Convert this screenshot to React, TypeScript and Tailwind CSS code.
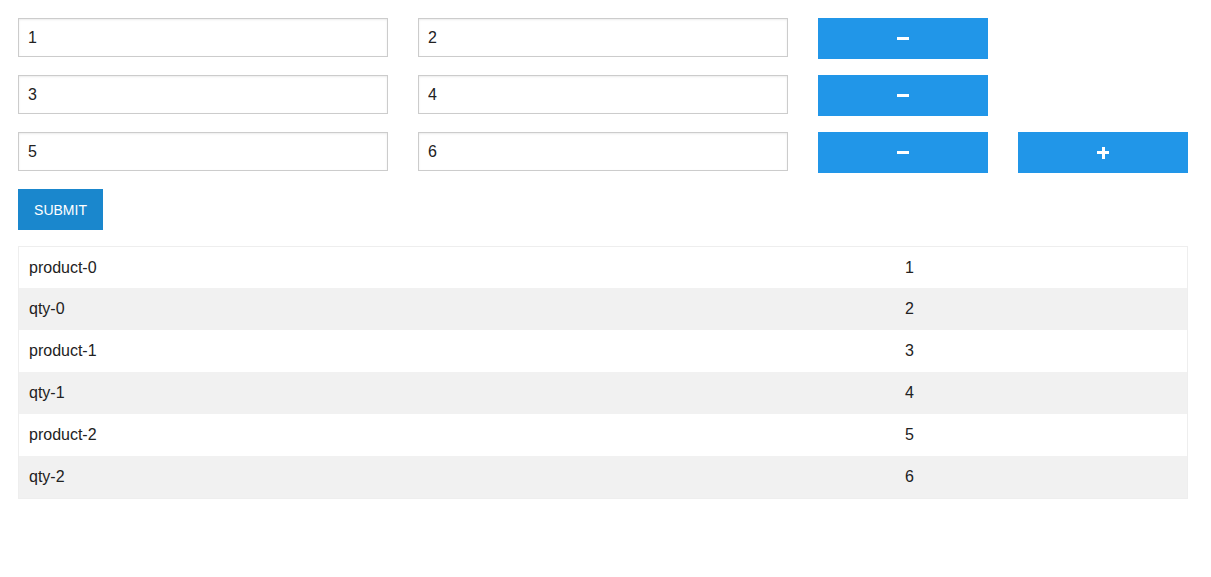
export default function App() {
  const rows = [
    ["1", "2"],
    ["3", "4"],
    ["5", "6"],
  ];
  const table = [
    ["product-0", "1"],
    ["qty-0", "2"],
    ["product-1", "3"],
    ["qty-1", "4"],
    ["product-2", "5"],
    ["qty-2", "6"],
  ];
  return (
    <div className="min-h-[577px] bg-white px-[18px] pt-[18px] text-[16px] text-[#222]" style={{ fontFamily: '"Liberation Sans", Arial, sans-serif' }}>
      {rows.map((r, i) => (
        <div key={i} className="mb-[16px] flex gap-[30px]">
          <input readOnly value={r[0]} className="h-[39px] w-[370px] border border-[#ccc] px-[9px] text-[16px] text-[#222] shadow-[inset_0_1px_2px_rgba(0,0,0,0.08)] outline-none" />
          <input readOnly value={r[1]} className="h-[39px] w-[370px] border border-[#ccc] px-[9px] text-[16px] text-[#222] shadow-[inset_0_1px_2px_rgba(0,0,0,0.08)] outline-none" />
          <button className="flex h-[41px] w-[170px] items-center justify-center bg-[#2196e8] text-white">
            <span className="block h-[3px] w-[12px] bg-white" />
          </button>
          {i === rows.length - 1 && (
            <button className="relative flex h-[41px] w-[170px] items-center justify-center bg-[#2196e8] text-white">
              <span className="relative block h-[12px] w-[12px]">
                <span className="absolute left-0 top-[4.5px] h-[3px] w-[12px] bg-white" />
                <span className="absolute left-[4.5px] top-0 h-[12px] w-[3px] bg-white" />
              </span>
            </button>
          )}
        </div>
      ))}
      <button className="mb-[16px] h-[41px] w-[85px] pt-[1px] bg-[#1a87cd] text-[14px] text-white">SUBMIT</button>
      <div className="w-[1170px] border border-[#eee]">
        {table.map((t, i) => (
          <div key={i} className={`flex items-center ${i === 0 ? "h-[41px]" : "h-[42px]"} ${i % 2 === 1 ? "bg-[#f1f1f1]" : "bg-white"}`}>
            <div className="w-[876px] pl-[10px]">{t[0]}</div>
            <div className="pl-[10px]">{t[1]}</div>
          </div>
        ))}
      </div>
    </div>
  );
}
